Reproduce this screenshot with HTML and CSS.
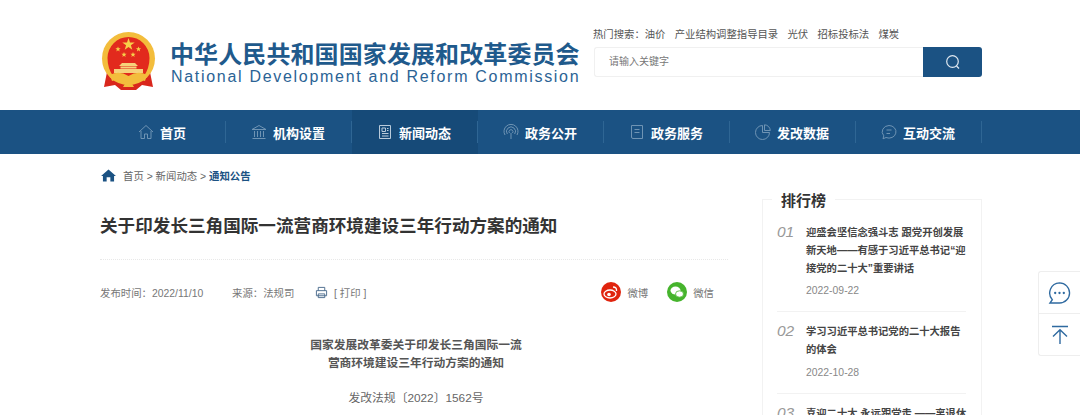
FILE: index.html
```html
<!DOCTYPE html>
<html lang="zh-CN">
<head>
<meta charset="utf-8">
<title>关于印发长三角国际一流营商环境建设三年行动方案的通知</title>
<link rel="stylesheet" href="styles.css">
</head>
<body>
<header class="top">
  <a class="brand">
    <svg class="emblem" viewBox="0 0 55 58" width="55" height="58">
      <path d="M6 40 L3 55 L14 53 L20 58 L35 58 L41 53 L52 55 L49 40 Z" fill="#d9261c"/>
      <circle cx="27.500" cy="26.500" r="26.500" fill="#f3bd3c"/>
      <path d="M27.500 5 A21 21 0 0 1 48.500 26 Q48.500 36 43 44 H12 Q6.500 36 6.500 26 A21 21 0 0 1 27.500 5 Z" fill="#e22a1d"/>
      <polygon class="star" points="27.500,6 29,10.500 33.700,10.500 29.900,13.300 31.300,17.800 27.500,15 23.700,17.800 25.100,13.300 21.300,10.500 26,10.500"/>
      <polygon class="star" points="17,14.500 17.700,16.300 19.600,16.300 18.100,17.500 18.600,19.400 17,18.300 15.400,19.400 15.900,17.500 14.400,16.300 16.300,16.300"/>
      <polygon class="star" points="37.500,14.500 38.200,16.300 40.100,16.300 38.600,17.500 39.100,19.400 37.500,18.300 35.900,19.400 36.400,17.500 34.900,16.300 36.800,16.300"/>
      <polygon class="star" points="23,20 23.700,21.800 25.600,21.800 24.100,23 24.600,24.900 23,23.800 21.400,24.900 21.900,23 20.400,21.800 22.300,21.800"/>
      <polygon class="star" points="32,20 32.700,21.800 34.600,21.800 33.100,23 33.600,24.900 32,23.800 30.400,24.900 30.900,23 29.400,21.800 31.300,21.800"/>
      <path d="M21 31 H34 L37 34 H18 Z M19.500 34.500 H35.500 V36.500 H19.500 Z M13 37 H42 V41 H13 Z" fill="#f6d27a"/>
      <path d="M9 43 Q18 38 27.500 44 Q37 38 46 43 L44 49 Q36 46 30 50 L33 55 H22 L25 50 Q19 46 11 49 Z" fill="#f3bd3c"/>
    </svg>
    <span class="brand-text">
      <span class="brand-cn">中华人民共和国国家发展和改革委员会</span>
      <span class="brand-en">National Development and Reform Commission</span>
    </span>
  </a>
  <div class="search-area">
    <div class="hot">
      <span>热门搜索：</span><a>油价</a><a>产业结构调整指导目录</a><a>光伏</a><a>招标投标法</a><a>煤炭</a>
    </div>
    <div class="search">
      <span class="placeholder">请输入关键字</span>
      <span class="search-btn">
        <svg viewBox="0 0 16 16" width="16" height="16"><circle cx="7.500" cy="7.500" r="5.800" class="ico-white"/><path d="M11.500 12 L14 14.500" class="ico-white"/></svg>
      </span>
    </div>
  </div>
</header>

<nav class="nav">
  <a class="nav-item">
    <svg viewBox="0 0 16 16" width="16" height="16"><path class="ico" d="M1 8 L8 1.500 L15 8 M3 7 V14.500 H6.500 V10 H9.500 V14.500 H13 V7"/></svg>首页</a>
  <a class="nav-item">
    <svg viewBox="0 0 16 16" width="16" height="16"><path class="ico" d="M1 5.500 L8 1.500 L15 5.500 Z M1.500 14.500 H14.500 M3.500 7 V13 M6.500 7 V13 M9.500 7 V13 M12.500 7 V13"/></svg>机构设置</a>
  <a class="nav-item active">
    <svg viewBox="0 0 16 16" width="16" height="16"><path class="ico-on" d="M2.500 1.500 H13.500 V14.500 H2.500 Z M5 4 H8.500 V7.500 H5 Z M10 4.500 H11.500 M10 6.500 H11.500 M5 9.500 H11.500 M5 12 H11.500"/></svg>新闻动态</a>
  <a class="nav-item">
    <svg viewBox="0 0 16 16" width="16" height="16"><path class="ico" d="M2 11 A7 7 0 1 1 14 11 M4.300 10 A4.500 4.500 0 1 1 11.700 10 M6.500 9 A2 2 0 1 1 9.500 9 M8 9 V15"/></svg>政务公开</a>
  <a class="nav-item">
    <svg viewBox="0 0 16 16" width="16" height="16"><path class="ico" d="M2.500 1.500 H13.500 V14.500 H4 Q2.500 14.500 2.500 13 Z M5.500 5.500 H10.500 M5.500 8.500 H10.500"/></svg>政务服务</a>
  <a class="nav-item">
    <svg viewBox="0 0 16 16" width="16" height="16"><path class="ico" d="M7.500 1.500 A7 7 0 1 0 14.500 8.500 H7.500 Z M9.500 0.800 A6 6 0 0 1 15.300 6.500 H9.500 Z"/></svg>发改数据</a>
  <a class="nav-item">
    <svg viewBox="0 0 16 16" width="16" height="16"><path class="ico" d="M8 1.500 A7 6.300 0 1 1 5 13.500 L2 14.800 L2.800 11.800 A7 6.300 0 0 1 8 1.500 Z M5.500 6 H10.500 M5.500 9.500 H9"/></svg>互动交流</a>
</nav>

<div class="crumbs">
  <svg viewBox="0 0 16 14" width="15" height="13"><path fill="#1b5283" d="M8 0.500 L16 7.500 L14 7.500 L14 13.500 L10 13.500 L10 9 L6 9 L6 13.500 L2 13.500 L2 7.500 L0 7.500 Z"/></svg>
  <span class="crumb-text">首页 &gt; 新闻动态 &gt; <b>通知公告</b></span>
</div>

<main class="content">
  <article class="article">
    <h1>关于印发长三角国际一流营商环境建设三年行动方案的通知</h1>
    <div class="meta">
      <span class="meta-date">发布时间：2022/11/10</span>
      <span class="meta-src">来源：法规司</span>
      <span class="meta-print">
        <svg viewBox="0 0 14 14" width="13" height="13"><path class="ico-print" d="M3.500 5 V1.500 H10.500 V5 M1.500 5 H12.500 V10.500 H1.500 Z M3.500 8.500 H10.500 V12.500 H3.500 Z"/></svg>
        [ 打印 ]
      </span>
      <span class="share">
        <span class="dot red">
          <svg viewBox="0 0 20 20" width="20" height="20"><ellipse cx="9" cy="12" rx="6" ry="4" class="ico-w"/><circle cx="8" cy="12.500" r="1.800" fill="#fff"/><path class="ico-w" d="M12 5 Q16 5 15.500 9"/></svg>
        </span>
        <span class="share-label">微博</span>
        <span class="dot green">
          <svg viewBox="0 0 20 20" width="20" height="20"><ellipse cx="8.500" cy="8.500" rx="5" ry="4" fill="#fff"/><ellipse cx="12.500" cy="12" rx="4" ry="3.200" fill="#fff" stroke="#46b42d" stroke-width="0.800"/></svg>
        </span>
        <span class="share-label">微信</span>
      </span>
    </div>
    <div class="body">
      <p class="doc-title">国家发展改革委关于印发长三角国际一流<br>营商环境建设三年行动方案的通知</p>
      <p class="doc-no">发改法规〔2022〕1562号</p>
    </div>
  </article>
  <aside class="rank">
    <h2>排行榜</h2>
    <ol class="rank-list">
      <li class="rank-item">
        <i>01</i>
        <div class="rank-body">
          <p class="rank-title">迎盛会坚信念强斗志 跟党开创发展新天地——有感于习近平总书记“迎接党的二十大”重要讲话</p>
          <time>2022-09-22</time>
        </div>
      </li>
      <li class="rank-item">
        <i>02</i>
        <div class="rank-body">
          <p class="rank-title">学习习近平总书记党的二十大报告的体会</p>
          <time>2022-10-28</time>
        </div>
      </li>
      <li class="rank-item">
        <i>03</i>
        <div class="rank-body">
          <p class="rank-title">喜迎二十大 永远跟党走 ——离退休</p>
        </div>
      </li>
    </ol>
  </aside>
</main>

<div class="float-tools">
  <a class="tool">
    <svg viewBox="0 0 24 24" width="23" height="23"><path class="ico-tool" d="M12 2 A10.500 10.500 0 1 1 12 23 H2 L4.500 19.500 A10.500 10.500 0 0 1 12 2 Z"/><circle cx="7.500" cy="12.500" r="1.200" fill="#2f6aa0"/><circle cx="12" cy="12.500" r="1.200" fill="#2f6aa0"/><circle cx="16.500" cy="12.500" r="1.200" fill="#2f6aa0"/></svg>
  </a>
  <a class="tool">
    <svg viewBox="0 0 18 20" width="18" height="20"><path class="ico-tool" d="M1 1.500 H17 M9 19 V5 M2 11.500 L9 4.800 L16 11.500"/></svg>
  </a>
</div>
</body>
</html>
```
FILE: styles.css
```css
* { box-sizing: border-box; margin: 0; padding: 0; }
html, body { height: 415px; overflow: hidden; }
body {
  position: relative;
  background: #fff;
  color: #333;
  font-family: "Liberation Sans", "Noto Sans CJK SC", sans-serif;
  font-size: 12px;
}
ol { list-style: none; }

.top {
  height: 110px;
  padding: 26px 98px 0 101px;
  display: flex;
  justify-content: space-between;
}
.brand { display: flex; align-items: flex-start; gap: 14px; padding-top: 6px; }
.emblem { display: block; }
.brand-text { display: flex; flex-direction: column; padding-top: 10px; }
.brand-cn {
  font-size: 24px;
  line-height: 26px;
  font-weight: 700;
  letter-spacing: 0.1px;
  color: #1f5a8c;
  white-space: nowrap;
}
.brand-en {
  font-size: 16px;
  line-height: 17px;
  letter-spacing: 1.7px;
  color: #2b6395;
  white-space: nowrap;
  padding-left: 1px;
}
.star { fill: #f7d04a; }

.search-area { width: 389px; }
.hot {
  font-size: 10.350px;
  line-height: 18px;
  color: #555;
  display: flex;
  white-space: nowrap;
}
.hot a { margin-right: 9.300px; }
.search {
  margin-top: 3px;
  margin-left: 1px;
  height: 30px;
  display: flex;
  align-items: stretch;
}
.placeholder {
  flex: 1;
  font-size: 10px;
  line-height: 28px;
  color: #777;
  padding-left: 14px;
  border: 1px solid #f0f0f0;
  border-right: 0;
  border-radius: 3px 0 0 3px;
}
.search-btn {
  width: 59px;
  border-radius: 0 3px 3px 0;
  background: #1b5283;
  display: flex;
  align-items: center;
  justify-content: center;
}
.ico-white { fill: none; stroke: #dfe8f0; stroke-width: 1.200; }

.nav {
  height: 44px;
  background: #1b5283;
  padding: 0 98px 0 100px;
  display: flex;
}
.nav-item {
  flex: 1;
  display: flex;
  align-items: center;
  justify-content: center;
  gap: 6px;
  padding-right: 2px;
  color: #fff;
  font-size: 13px;
  font-weight: 700;
  position: relative;
  white-space: nowrap;
}
.nav-item::after {
  content: "";
  position: absolute;
  right: 0;
  top: 11px;
  height: 22px;
  width: 1px;
  background: #2f6694;
}
.nav-item.active { background: #164a78; }
.ico { fill: none; stroke: #6f94b4; stroke-width: 1; }
.ico-on { fill: none; stroke: #b9cbdb; stroke-width: 1; }

.crumbs {
  height: 44px;
  padding: 15px 0 0 101px;
  display: flex;
  align-items: flex-start;
  gap: 7px;
  color: #666;
  font-size: 10.400px;
  line-height: 14px;
}
.crumb-text { margin-top: 1px; }
.crumb-text b { color: #1b5283; }

.content {
  padding: 0 98px 0 100px;
  display: flex;
  justify-content: space-between;
  align-items: flex-start;
}
.article { width: 628px; }
.article h1 {
  font-size: 17.600px;
  line-height: 26px;
  font-weight: 700;
  color: #333;
  margin-top: 15px;
  padding-bottom: 20px;
  border-bottom: 1px dotted #e8e8e8;
}
.meta {
  height: 66px;
  padding-bottom: 2px;
  display: flex;
  align-items: center;
  color: #777;
  font-size: 10.400px;
}
.meta-date { width: 132px; }
.meta-src { width: 83px; }
.meta-print { display: flex; align-items: center; gap: 6px; }
.ico-print { fill: none; stroke: #47698a; stroke-width: 1; }
.share { margin-left: auto; display: flex; align-items: center; padding-right: 14px; }
.share-label { margin-left: 6px; margin-right: 19px; }
.share-label:last-child { margin-right: 0; }
.dot { width: 20px; height: 20px; border-radius: 50%; display: block; }
.dot svg { display: block; }
.red { background: #e0240e; }
.green { background: #46b42d; }
.ico-w { fill: none; stroke: #fff; stroke-width: 1.300; }

.body { text-align: center; padding-left: 4px; margin-top: 5px; color: #555; }
.doc-title { font-size: 11.750px; line-height: 18px; font-weight: 700; color: #555; padding-top: 5px; }
.doc-no { font-size: 11.800px; line-height: 18px; margin-top: 17px; color: #666; }

.rank {
  width: 220px;
  margin-top: 1px;
  border: 1px solid #f2f2f2;
  padding: 0 15px 0 14px;
  position: relative;
  height: 300px;
}
.rank h2 {
  position: absolute;
  left: 9px;
  top: -9px;
  padding: 0 9px;
  background: #fff;
  font-size: 15px;
  line-height: 20px;
  font-weight: 700;
  color: #333;
}
.rank-list { padding-top: 24px; }
.rank-item {
  display: flex;
  gap: 12px;
  padding-bottom: 12px;
  margin-bottom: 11px;
  border-bottom: 1px solid #f2f2f2;
}
.rank-item i {
  flex: none;
  width: 17px;
  font-size: 15.500px;
  line-height: 20px;
  color: #999;
  margin-top: -2px;
}
.rank-body { flex: 1; min-width: 0; }
.rank-title { font-size: 10.300px; line-height: 17.800px; font-weight: 700; color: #444; margin-right: -2px; }
time { display: block; margin-top: 6px; font-size: 10.400px; line-height: 16px; color: #888; }

.float-tools {
  position: absolute;
  right: 0;
  top: 271px;
  width: 42px;
  height: 85px;
  background: #fff;
  border: 1px solid #eee;
  border-right: 0;
  border-radius: 3px 0 0 3px;
}
.tool { height: 41px; display: flex; align-items: center; justify-content: center; }
.tool + .tool { height: 42px; border-top: 1px solid #eee; }
.ico-tool { fill: none; stroke: #2f6aa0; stroke-width: 1.400; }
```
